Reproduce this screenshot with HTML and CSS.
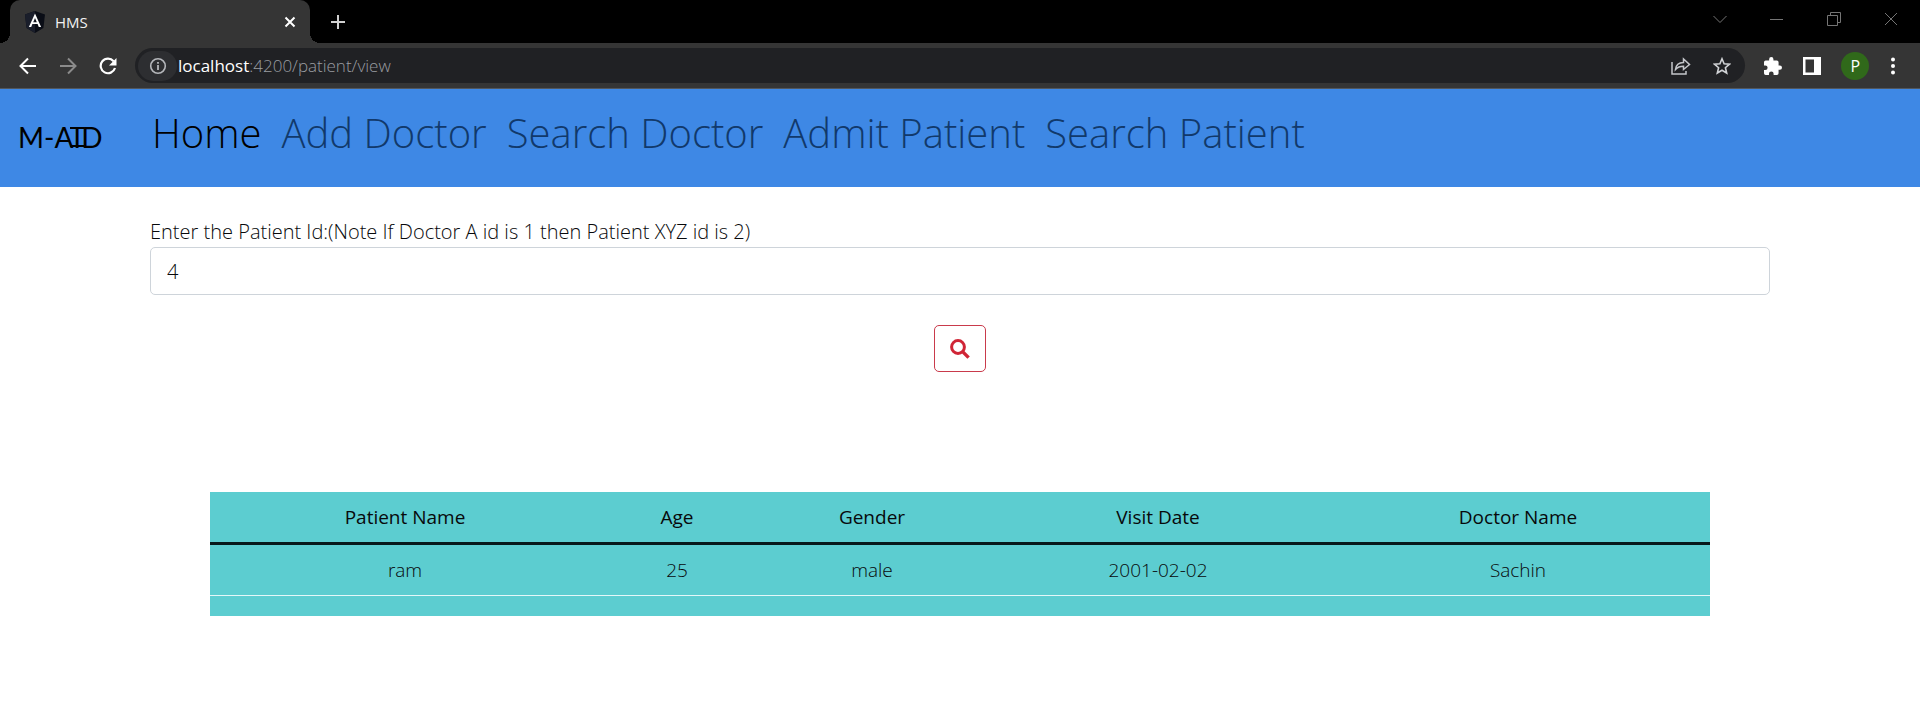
FILE: index.html
```html
<!DOCTYPE html>
<html lang="en">
<head>
<meta charset="utf-8">
<title>HMS</title>
<link rel="stylesheet" href="styles.css">
</head>
<body>
<header class="browser">
  <div class="tabstrip">
    <div class="tab">
      <svg class="favicon" width="20" height="22" viewBox="0 0 20 22" aria-hidden="true"><path d="M10 0 20 3.5 18.4 17 10 22 1.600 17 0 3.500Z" fill="#0a0d16"/><path d="M10 0v22L1.600 17 0 3.500Z" fill="#1a1e2b"/><path d="M10 2.500 3.900 16h2.300l1.200-3h5.200l1.200 3h2.300Zm0 4.500 1.800 4.200H8.200Z" fill="#fff"/></svg>
      <span class="tab-title">HMS</span>
      <button class="icon-btn tab-close" aria-label="Close tab"><svg width="12" height="12" viewBox="0 0 12 12"><path d="M1.500 1.500l9 9m0-9l-9 9" stroke="#fff" stroke-width="2"/></svg></button>
    </div>
    <button class="icon-btn new-tab" aria-label="New tab"><svg width="16" height="16" viewBox="0 0 16 16"><path d="M8 1v14M1 8h14" stroke="#d0d0d0" stroke-width="2"/></svg></button>
    <div class="window-controls">
      <button class="icon-btn" aria-label="Search tabs"><svg width="14" height="14" viewBox="0 0 14 14"><path d="M.5 4 7 10.500 13.500 4"/></svg></button>
      <button class="icon-btn" aria-label="Minimize"><svg width="14" height="14" viewBox="0 0 14 14"><path d="M0 7.500h13"/></svg></button>
      <button class="icon-btn" aria-label="Restore"><svg width="14" height="14" viewBox="0 0 14 14"><path d="M.5 3.500h10v10H.5ZM3.500 3V.5h10v10H11"/></svg></button>
      <button class="icon-btn" aria-label="Close window"><svg width="14" height="14" viewBox="0 0 14 14"><path d="M1 1l12 12M13 1 1 13"/></svg></button>
    </div>
  </div>
  <div class="toolbar">
    <button class="icon-btn" aria-label="Back"><svg width="18" height="18" viewBox="0 0 18 18" fill="none" stroke="#fff" stroke-width="2"><path d="M17 9H2M9 1.500 1.500 9 9 16.500"/></svg></button>
    <button class="icon-btn" aria-label="Forward"><svg width="18" height="18" viewBox="0 0 18 18" fill="none" stroke="#8b8b8b" stroke-width="2"><path d="M1 9h15M9 1.500 16.500 9 9 16.500"/></svg></button>
    <button class="icon-btn" aria-label="Reload"><svg width="18" height="18" viewBox="0 0 18 18"><path d="M14.600 4.200A7.300 7.300 0 1 0 16 11" fill="none" stroke="#fff" stroke-width="2.200"/><path d="M17.500 1v7.500H10Z" fill="#fff"/></svg></button>
    <div class="omnibox">
      <button class="icon-btn site-info" aria-label="Site information"><svg width="18" height="18" viewBox="0 0 18 18"><circle cx="9" cy="9" r="7.300" fill="none" stroke="#b4b6ba" stroke-width="1.600"/><path d="M9 8v5M9 5v1.800" stroke="#b4b6ba" stroke-width="1.800"/></svg></button>
      <span class="url"><span class="host">localhost</span>:4200/patient/view</span>
      <button class="icon-btn" aria-label="Share"><svg width="20" height="18" viewBox="0 0 20 18" fill="none" stroke="#c4c6ca" stroke-width="1.500"><path d="M1 5v12h14v-3"/><path d="M4.500 12.500C5 8 8 5.500 12.500 5.500V2L18.500 7.500 12.500 12.500V9.300C9 9.300 6.500 10.200 4.500 12.500Z"/></svg></button>
      <button class="icon-btn" aria-label="Bookmark"><svg width="18" height="18" viewBox="0 0 18 18"><path d="M9 1.800l2.100 5 5.400.4-4.100 3.500 1.300 5.300L9 13.200 4.300 16l1.300-5.300L1.500 7.200l5.400-.4Z" fill="none" stroke="#d0d2d5" stroke-width="1.600"/></svg></button>
    </div>
    <div class="actions">
      <button class="icon-btn" aria-label="Extensions"><svg width="18" height="18" viewBox="2 1 21 21"><path d="M20.500 11H19V7a2 2 0 0 0-2-2h-4V3.500a2.500 2.500 0 0 0-5 0V5H4a2 2 0 0 0-2 2v3.800h1.500a2.700 2.700 0 0 1 0 5.400H2V20a2 2 0 0 0 2 2h3.800v-1.500a2.700 2.700 0 0 1 5.400 0V22H17a2 2 0 0 0 2-2v-4h1.500a2.500 2.500 0 0 0 0-5Z" fill="#fff"/></svg></button>
      <button class="icon-btn" aria-label="Side panel"><svg width="18" height="18" viewBox="0 0 18 18"><path d="M0 0h18v18H0ZM2.500 2.500v13H11v-13Z" fill="#fff" fill-rule="evenodd"/></svg></button>
      <button class="icon-btn avatar" aria-label="Profile P">P</button>
      <button class="icon-btn" aria-label="Menu"><svg width="6" height="18" viewBox="0 0 6 18" fill="#fff"><circle cx="3" cy="2.500" r="2"/><circle cx="3" cy="9" r="2"/><circle cx="3" cy="15.500" r="2"/></svg></button>
    </div>
  </div>
</header>

<nav class="navbar">
  <a class="brand" href="#" aria-label="M-AID">M-A<span class="brand-i">I</span>D</a>
  <a class="nav-link active" href="#">Home</a>
  <a class="nav-link" href="#">Add Doctor</a>
  <a class="nav-link" href="#">Search Doctor</a>
  <a class="nav-link" href="#">Admit Patient</a>
  <a class="nav-link" href="#">Search Patient</a>
</nav>

<main>
  <form class="search">
    <label for="pid">Enter the Patient Id:(Note If Doctor A id is 1 then Patient XYZ id is 2)</label>
    <input id="pid" type="text" value="4">
    <button class="search-btn" type="button" aria-label="Search"><svg width="20" height="20" viewBox="0 0 20 20" fill="none" stroke="#d02536"><circle cx="8" cy="8" r="6.400" stroke-width="3"/><path d="M12.600 12.600l6 6" stroke-width="3.400"/></svg></button>
  </form>
  <table class="results">
    <colgroup><col class="c-name"><col class="c-age"><col class="c-gender"><col class="c-date"><col class="c-doctor"></colgroup>
    <thead><tr><th>Patient Name</th><th>Age</th><th>Gender</th><th>Visit Date</th><th>Doctor Name</th></tr></thead>
    <tbody>
      <tr><td>ram</td><td>25</td><td>male</td><td>2001-02-02</td><td>Sachin</td></tr>
      <tr class="spacer"><td colspan="5"></td></tr>
    </tbody>
  </table>
</main>
</body>
</html>
```
FILE: styles.css
```css
* { box-sizing: border-box; }

body {
  margin: 0;
  background: #fff;
  color: #08090b;
  font: 300 20px/30px "Open Sans", "Noto Sans", sans-serif;
}

.icon-btn {
  display: flex;
  flex: none;
  align-items: center;
  justify-content: center;
  padding: 0;
  border: 0;
  background: none;
}

.browser { background: #353535; }

.tabstrip {
  display: flex;
  align-items: center;
  height: 43px;
  padding-left: 10px;
  background: #000;
}

.tab {
  position: relative;
  display: flex;
  align-items: center;
  width: 300px;
  height: 43px;
  padding: 0 14px 0 15px;
  border-radius: 10px 10px 0 0;
  background: #353535;
}

.tab::before,
.tab::after {
  content: "";
  position: absolute;
  bottom: 0;
  width: 10px;
  height: 10px;
}
.tab::before { left: -10px; background: radial-gradient(circle at 0 0, #000 10px, #353535 10px); }
.tab::after { right: -10px; background: radial-gradient(circle at 100% 0, #000 10px, #353535 10px); }

.tab-title {
  flex: 1;
  padding: 0 10px;
  color: #f2f2f2;
  font-size: 15px;
  font-weight: 400;
  line-height: 20px;
}

.new-tab { margin-left: 20px; }

.window-controls {
  display: flex;
  gap: 43px;
  margin-left: auto;
  padding: 0 22px 6px 0;
}
.window-controls svg { fill: none; stroke: #757575; stroke-width: 1; }

.toolbar {
  display: flex;
  align-items: center;
  gap: 22px;
  height: 46px;
  padding: 0 24px 0 19px;
  border-bottom: 1px solid #50575f;
}

.actions {
  display: flex;
  align-items: center;
  justify-content: space-between;
  width: 132px;
  margin-left: -3px;
}

.omnibox {
  display: flex;
  flex: 1;
  align-items: center;
  gap: 22px;
  height: 35px;
  margin-left: -4px;
  padding: 0 14px 0 3px;
  border-radius: 18px;
  background: #202124;
}

.site-info {
  width: 39px;
  height: 30px;
  border-radius: 15px;
  background: #2d2e31;
}

.url {
  flex: 1;
  margin-left: -21px;
  color: #9a9da1;
  font-size: 17px;
}
.host { color: #fff; font-weight: 400; }

.avatar {
  width: 28px;
  height: 28px;
  border-radius: 50%;
  background: #30691a;
  color: #fff;
  font: 400 16px "Open Sans", sans-serif;
}

.navbar {
  display: flex;
  flex-wrap: wrap;
  align-items: baseline;
  gap: 20px;
  padding: 14px 18px 24px;
  background: #3e88e5;
}

.nav-link {
  color: #11396b;
  font-size: 40px;
  line-height: 60px;
  text-decoration: none;
}
.nav-link.active { color: #000; }

.brand {
  width: 114px;
  color: #000;
  font: 400 28px/30px Lato, "Open Sans", sans-serif;
  text-decoration: none;
}

.brand-i {
  position: relative;
  display: inline-block;
}

/* serif bars of the monogram's I */
.brand-i::before {
  content: "";
  position: absolute;
  inset: 5px -3px;
  border: solid #000;
  border-width: 2px 0;
}

main { padding: 30px 150px; }

.search {
  display: flex;
  flex-direction: column;
}

.search input {
  width: 100%;
  height: 48px;
  padding: 0 16px;
  border: 1px solid #ced4da;
  border-radius: 5px;
  color: #08090b;
  font: inherit;
}

.search-btn {
  display: flex;
  align-self: center;
  align-items: center;
  justify-content: center;
  width: 52px;
  height: 47px;
  margin-top: 30px;
  border: 1px solid #c93a4b;
  border-radius: 5px;
  background: #fff;
}

.results {
  width: calc(100% - 120px);
  margin: 120px 60px 0;
  border-collapse: collapse;
  table-layout: fixed;
  background: #5ccdd0;
  font-size: 19px;
  text-align: center;
}
.c-name { width: 390px; }
.c-age { width: 154px; }
.c-gender { width: 236px; }
.c-date { width: 336px; }
.c-doctor { width: 384px; }

.results th, .results td { padding: 10px; }
.results th { font-weight: 500; }
.results thead { border-bottom: 3px solid #07191b; }
.results tbody tr { border-bottom: 1px solid #e3f7f8; }
.results .spacer { border-bottom: 0; }
```
